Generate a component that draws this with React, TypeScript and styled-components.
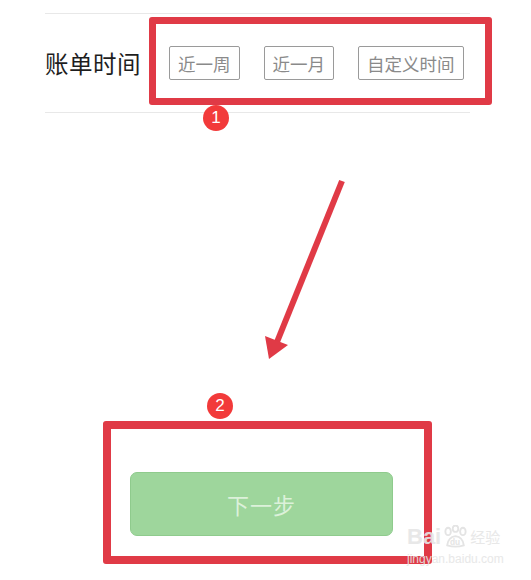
import React from 'react';
import styled, { createGlobalStyle } from 'styled-components';

const GlobalStyle = createGlobalStyle`
    html, body {
        margin: 0;
        padding: 0;
        background: #ffffff;
    }
    body {
        font-family: "Noto Sans CJK SC", "Liberation Sans", sans-serif;
    }
`;

const Page = styled.div`
    position: relative;
    width: 531px;
    height: 580px;
    overflow: hidden;
    padding-top: 13px;
    box-sizing: border-box;
`;

const FormRow = styled.div`
    margin-left: 45px;
    width: 425px;
    height: 100px;
    box-sizing: border-box;
    border-top: 1px solid #e8e8e8;
    border-bottom: 1px solid #e8e8e8;
    display: flex;
    align-items: center;
`;

const Label = styled.div`
    width: 124px;
    font-size: 23.5px;
    color: #1e1e1e;
    letter-spacing: 0.5px;
`;

const Chips = styled.div`
    display: flex;
    gap: 24px;
`;

const Chip = styled.div`
    height: 34px;
    padding: 0 8px;
    box-sizing: border-box;
    border: 1.5px solid #9a9a9a;
    border-radius: 2px;
    display: flex;
    align-items: center;
    font-size: 17.5px;
    color: #8a8a8a;
`;

const Footer = styled.div`
    margin-top: 359px;
    padding-left: 130px;
`;

const NextButton = styled.div`
    width: 263px;
    height: 64px;
    box-sizing: border-box;
    background: #9ed69c;
    border: 1px solid #8fcb8d;
    border-radius: 7px;
    display: flex;
    align-items: center;
    justify-content: center;
    font-size: 22px;
    color: #dcf1da;
    letter-spacing: 1px;
`;

/* annotation overlays drawn over the screenshot */
const Frame = styled.div<{ $x: number; $y: number; $w: number; $h: number; $b: number }>`
    position: absolute;
    left: ${(p) => p.$x}px;
    top: ${(p) => p.$y}px;
    width: ${(p) => p.$w}px;
    height: ${(p) => p.$h}px;
    box-sizing: border-box;
    border: ${(p) => p.$b}px solid #e03a46;
    border-radius: 3px;
`;

const Badge = styled.div<{ $x: number; $y: number }>`
    position: absolute;
    left: ${(p) => p.$x - 13}px;
    top: ${(p) => p.$y - 13}px;
    width: 26px;
    height: 26px;
    border-radius: 50%;
    background: #f23a3a;
    color: #ffffff;
    font-family: "Liberation Sans", sans-serif;
    font-size: 17px;
    display: flex;
    align-items: center;
    justify-content: center;
`;

const ArrowSvg = styled.svg`
    position: absolute;
    left: 0;
    top: 0;
    pointer-events: none;
`;

const Watermark = styled.div`
    position: absolute;
    left: 407px;
    top: 524px;
    color: #e6e6e6;
    opacity: 0.9;
    font-family: "Liberation Sans", sans-serif;
    display: flex;
    flex-direction: column;
    white-space: nowrap;
`;

const MarkTop = styled.div`
    display: flex;
    align-items: center;
    gap: 1px;
    font-size: 22px;
    font-weight: bold;
    line-height: 26px;
`;

const MarkJing = styled.span`
    font-size: 15px;
    font-weight: normal;
    font-family: "Noto Sans CJK SC", sans-serif;
`;

const MarkUrl = styled.div`
    font-size: 12px;
    line-height: 14px;
    margin-top: 2px;
`;

export default function App() {
    return (
        <Page>
            <GlobalStyle />
            <FormRow>
                <Label>账单时间</Label>
                <Chips>
                    <Chip>近一周</Chip>
                    <Chip>近一月</Chip>
                    <Chip>自定义时间</Chip>
                </Chips>
            </FormRow>
            <Footer>
                <NextButton>下一步</NextButton>
            </Footer>

            <Frame $x={149} $y={17} $w={343} $h={88} $b={7} />
            <Frame $x={103} $y={421} $w={329} $h={143} $b={8} />
            <Badge $x={216} $y={118}>1</Badge>
            <Badge $x={220} $y={406}>2</Badge>

            <ArrowSvg width="531" height="580" viewBox="0 0 531 580">
                <line x1="342" y1="181" x2="277" y2="342" stroke="#e03a46" strokeWidth="6" strokeLinecap="butt" />
                <polygon points="269,359 265,336 288,345" fill="#e03a46" />
            </ArrowSvg>

            <Watermark>
                <MarkTop>
                    Bai
                    <svg width="27" height="24" viewBox="0 0 28 26">
                        <g fill="none" stroke="#e2e2e2" strokeWidth="2">
                            <ellipse cx="6" cy="7" rx="3" ry="4" />
                            <ellipse cx="14" cy="4" rx="3" ry="3.5" />
                            <ellipse cx="22" cy="7" rx="3" ry="4" />
                            <path d="M5 22 Q6 13 14 12 Q22 13 23 22 Q14 25 5 22 Z" />
                        </g>
                        <text x="8" y="22" fontSize="9" fill="#e2e2e2" fontFamily="Liberation Sans">du</text>
                    </svg>
                    <MarkJing>经验</MarkJing>
                </MarkTop>
                <MarkUrl>jingyan.baidu.com</MarkUrl>
            </Watermark>
        </Page>
    );
}
